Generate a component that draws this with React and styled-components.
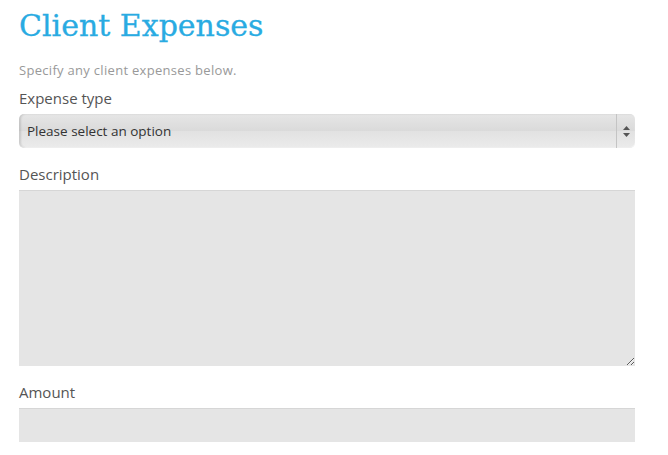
import React from "react";
import styled, { createGlobalStyle } from "styled-components";

const GlobalStyle = createGlobalStyle`
  body {
    margin: 0;
    background: #ffffff;
    font-family: "Open Sans", "DejaVu Sans", sans-serif;
  }
`;

const App = () => {
  return (
    <>
      <GlobalStyle />
      <MainWrapper>
        <HeaderText>Client Expenses</HeaderText>
        <SubText>Specify any client expenses below.</SubText>

        <Field>
          <Label>Expense type</Label>
          <SelectBox>
            <SelectText>Please select an option</SelectText>
            <ArrowBox>
              <svg width="7" height="11" viewBox="0 0 7 11">
                <path d="M3.5 0 L7 4 L0 4 Z" fill="#555" />
                <path d="M0 7 L7 7 L3.5 11 Z" fill="#555" />
              </svg>
            </ArrowBox>
          </SelectBox>
        </Field>

        <Field>
          <Label>Description</Label>
          <TextArea />
        </Field>

        <Field>
          <Label>Amount</Label>
          <AmountInput type="text" />
        </Field>
      </MainWrapper>
    </>
  );
};

export default App;

//css Wrapper
const MainWrapper = styled.div`
  padding: 9px 33px 0 19px;
  display: flex;
  flex-direction: column;
`;

const Field = styled.div`
  display: flex;
  flex-direction: column;
  margin-bottom: 16px;
`;

//css Text
const HeaderText = styled.h1`
  margin: 0;
  font-family: "DejaVu Serif", serif;
  font-weight: normal;
  font-size: 30px;
  line-height: 34px;
  color: #29abe2;
  -webkit-text-stroke: 0.3px #29abe2;
`;

const SubText = styled.p`
  margin: 19px 0 10px;
  font-size: 13px;
  line-height: 16px;
  letter-spacing: 0.3px;
  color: #999999;
`;

const Label = styled.label`
  font-size: 15px;
  line-height: 20px;
  color: #555555;
  margin-bottom: 6px;
`;

//css Select
const SelectBox = styled.div`
  display: flex;
  align-items: center;
  height: 34px;
  box-sizing: border-box;
  border-radius: 5px;
  background: linear-gradient(#e6e6e6 0%, #dadada 50%, #e2e2e2 51%, #ebebeb 100%);
  box-shadow: inset 2px 0 2px rgba(0, 0, 0, 0.12), inset 0 -1px 1px rgba(255, 255, 255, 0.6);
`;

const SelectText = styled.span`
  flex: 1;
  padding-left: 8px;
  font-size: 13.5px;
  color: #333333;
`;

const ArrowBox = styled.div`
  width: 18px;
  height: 100%;
  border-left: 1px solid #c4c4c4;
  display: flex;
  align-items: center;
  justify-content: center;
`;

//css input
const TextArea = styled.textarea`
  height: 176px;
  box-sizing: border-box;
  border: none;
  border-top: 1px solid #d6d6d6;
  background: #e5e5e5;
  outline: none;
  resize: vertical;
  font-family: inherit;
`;

const AmountInput = styled.input`
  height: 34px;
  box-sizing: border-box;
  border: none;
  border-top: 1px solid #d6d6d6;
  background: #e5e5e5;
  outline: none;
`;
